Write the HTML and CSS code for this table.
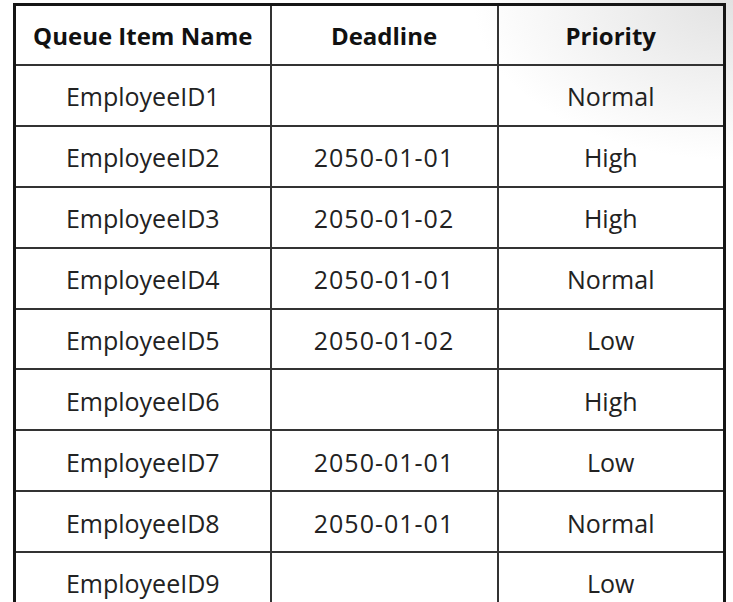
FILE: index.html
```html
<!DOCTYPE html>
<html>
<head>
<meta charset="utf-8">
<link rel="stylesheet" href="styles.css">
</head>
<body>
<div class="page">
<table class="queue">
  <colgroup><col class="c1"><col class="c2"><col class="c3"></colgroup>
  <thead>
    <tr><th>Queue Item Name</th><th>Deadline</th><th>Priority</th></tr>
  </thead>
  <tbody>
    <tr><td>EmployeeID1</td><td class="date"></td><td>Normal</td></tr>
    <tr><td>EmployeeID2</td><td class="date">2050-01-01</td><td>High</td></tr>
    <tr><td>EmployeeID3</td><td class="date">2050-01-02</td><td>High</td></tr>
    <tr><td>EmployeeID4</td><td class="date">2050-01-01</td><td>Normal</td></tr>
    <tr><td>EmployeeID5</td><td class="date">2050-01-02</td><td>Low</td></tr>
    <tr><td>EmployeeID6</td><td class="date"></td><td>High</td></tr>
    <tr><td>EmployeeID7</td><td class="date">2050-01-01</td><td>Low</td></tr>
    <tr><td>EmployeeID8</td><td class="date">2050-01-01</td><td>Normal</td></tr>
    <tr><td>EmployeeID9</td><td class="date"></td><td>Low</td></tr>
  </tbody>
</table>
</div>
</body>
</html>
```
FILE: styles.css
```css
html, body {
  margin: 0;
  padding: 0;
  background: #fff;
}
body {
  width: 733px;
  height: 602px;
  overflow: hidden;
  background: radial-gradient(ellipse 260px 160px at 733px 0px, #e2e2e2 0%, rgba(255,255,255,0) 100%), #fff;
}
.page {
  padding: 3px 0 0 13px;
}
.queue {
  border-collapse: collapse;
  table-layout: fixed;
  width: 713px;
  border: 3px solid #151515;
  font-family: "Open Sans", "Lato", sans-serif;
  color: #222;
  background: transparent;
}
.c1 { width: 256px; }
.c2 { width: 227px; }
.c3 { width: 227px; }
.queue th, .queue td {
  border: 2px solid #333;
  padding: 0;
  text-align: center;
  vertical-align: middle;
}
.queue th {
  height: 58px;
  font-weight: 700;
  font-size: 24px;
  color: #111;
}
.queue td {
  height: 56.875px;
  font-weight: 400;
  font-size: 25px;
  line-height: 34px;
  padding-top: 2px;
}
.queue td.date {
  letter-spacing: 1px;
}
```
